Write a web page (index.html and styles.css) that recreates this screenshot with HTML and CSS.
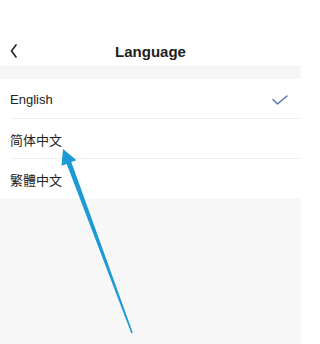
FILE: index.html
```html
<!DOCTYPE html>
<html>
<head>
<meta charset="utf-8">
<link rel="stylesheet" href="styles.css">
</head>
<body>
<div class="app">
  <header class="header">
    <div class="bar">
      <svg class="back" width="8" height="14" viewBox="0 0 8 14"><path d="M6 1 L1.5 7 L6 13" fill="none" stroke="#222" stroke-width="1.6" stroke-linecap="round" stroke-linejoin="round"/></svg>
      <div class="title">Language</div>
    </div>
  </header>
  <div class="band"></div>
  <ul class="list">
    <li class="row"><span>English</span>
      <svg class="check" width="16" height="10" viewBox="0 0 16 10"><path d="M1 4.5 L5.5 9 L15 1" fill="none" stroke="#4f74ad" stroke-width="1.4" stroke-linecap="round" stroke-linejoin="round"/></svg>
    </li>
    <li class="row"><span class="cjk">简体中文</span></li>
    <li class="row last"><span class="cjk">繁體中文</span></li>
  </ul>
  <svg class="arrow" width="310" height="344" viewBox="0 0 310 344">
    <polygon points="63,149 76.5,160.2 71.3,162.1 132.8,332.7 131.3,333.3 66.7,163.9 61.5,165.8" fill="#1c9ad6"/>
  </svg>
</div>
</body>
</html>
```
FILE: styles.css
```css
html, body {
  margin: 0;
  padding: 0;
  background: #ffffff;
}
body {
  font-family: "Liberation Sans", "Noto Sans CJK SC", sans-serif;
  color: #222;
}
.app {
  position: relative;
  width: 301px;
  height: 344px;
  background: #f7f7f7;
}
.header {
  background: #fff;
  height: 67px;
  padding-top: 36px;
  box-sizing: border-box;
  border-bottom: 1px solid #efefef;
}
.bar {
  position: relative;
  height: 30px;
  display: flex;
  align-items: center;
  justify-content: center;
}
.back {
  position: absolute;
  left: 10px;
  top: 8px;
}
.title {
  font-size: 15px;
  font-weight: bold;
  color: #1e1e1e;
}
.band {
  height: 12px;
  background: #f5f5f5;
}
.list {
  list-style: none;
  margin: 0;
  padding: 0;
  background: #fff;
}
.row {
  height: 40px;
  margin-left: 10px;
  padding-right: 13px;
  display: flex;
  align-items: center;
  justify-content: space-between;
  border-bottom: 1px solid #efefef;
  box-sizing: border-box;
  font-size: 13px;
  padding-top: 2px;
}
.row.last {
  border-bottom: none;
  height: 39px;
}
.cjk {
  font-family: "Noto Sans CJK SC", sans-serif;
  font-size: 13px;
  letter-spacing: 0;
}
.check {
  display: block;
}
.arrow {
  position: absolute;
  left: 0;
  top: 0;
}
```
